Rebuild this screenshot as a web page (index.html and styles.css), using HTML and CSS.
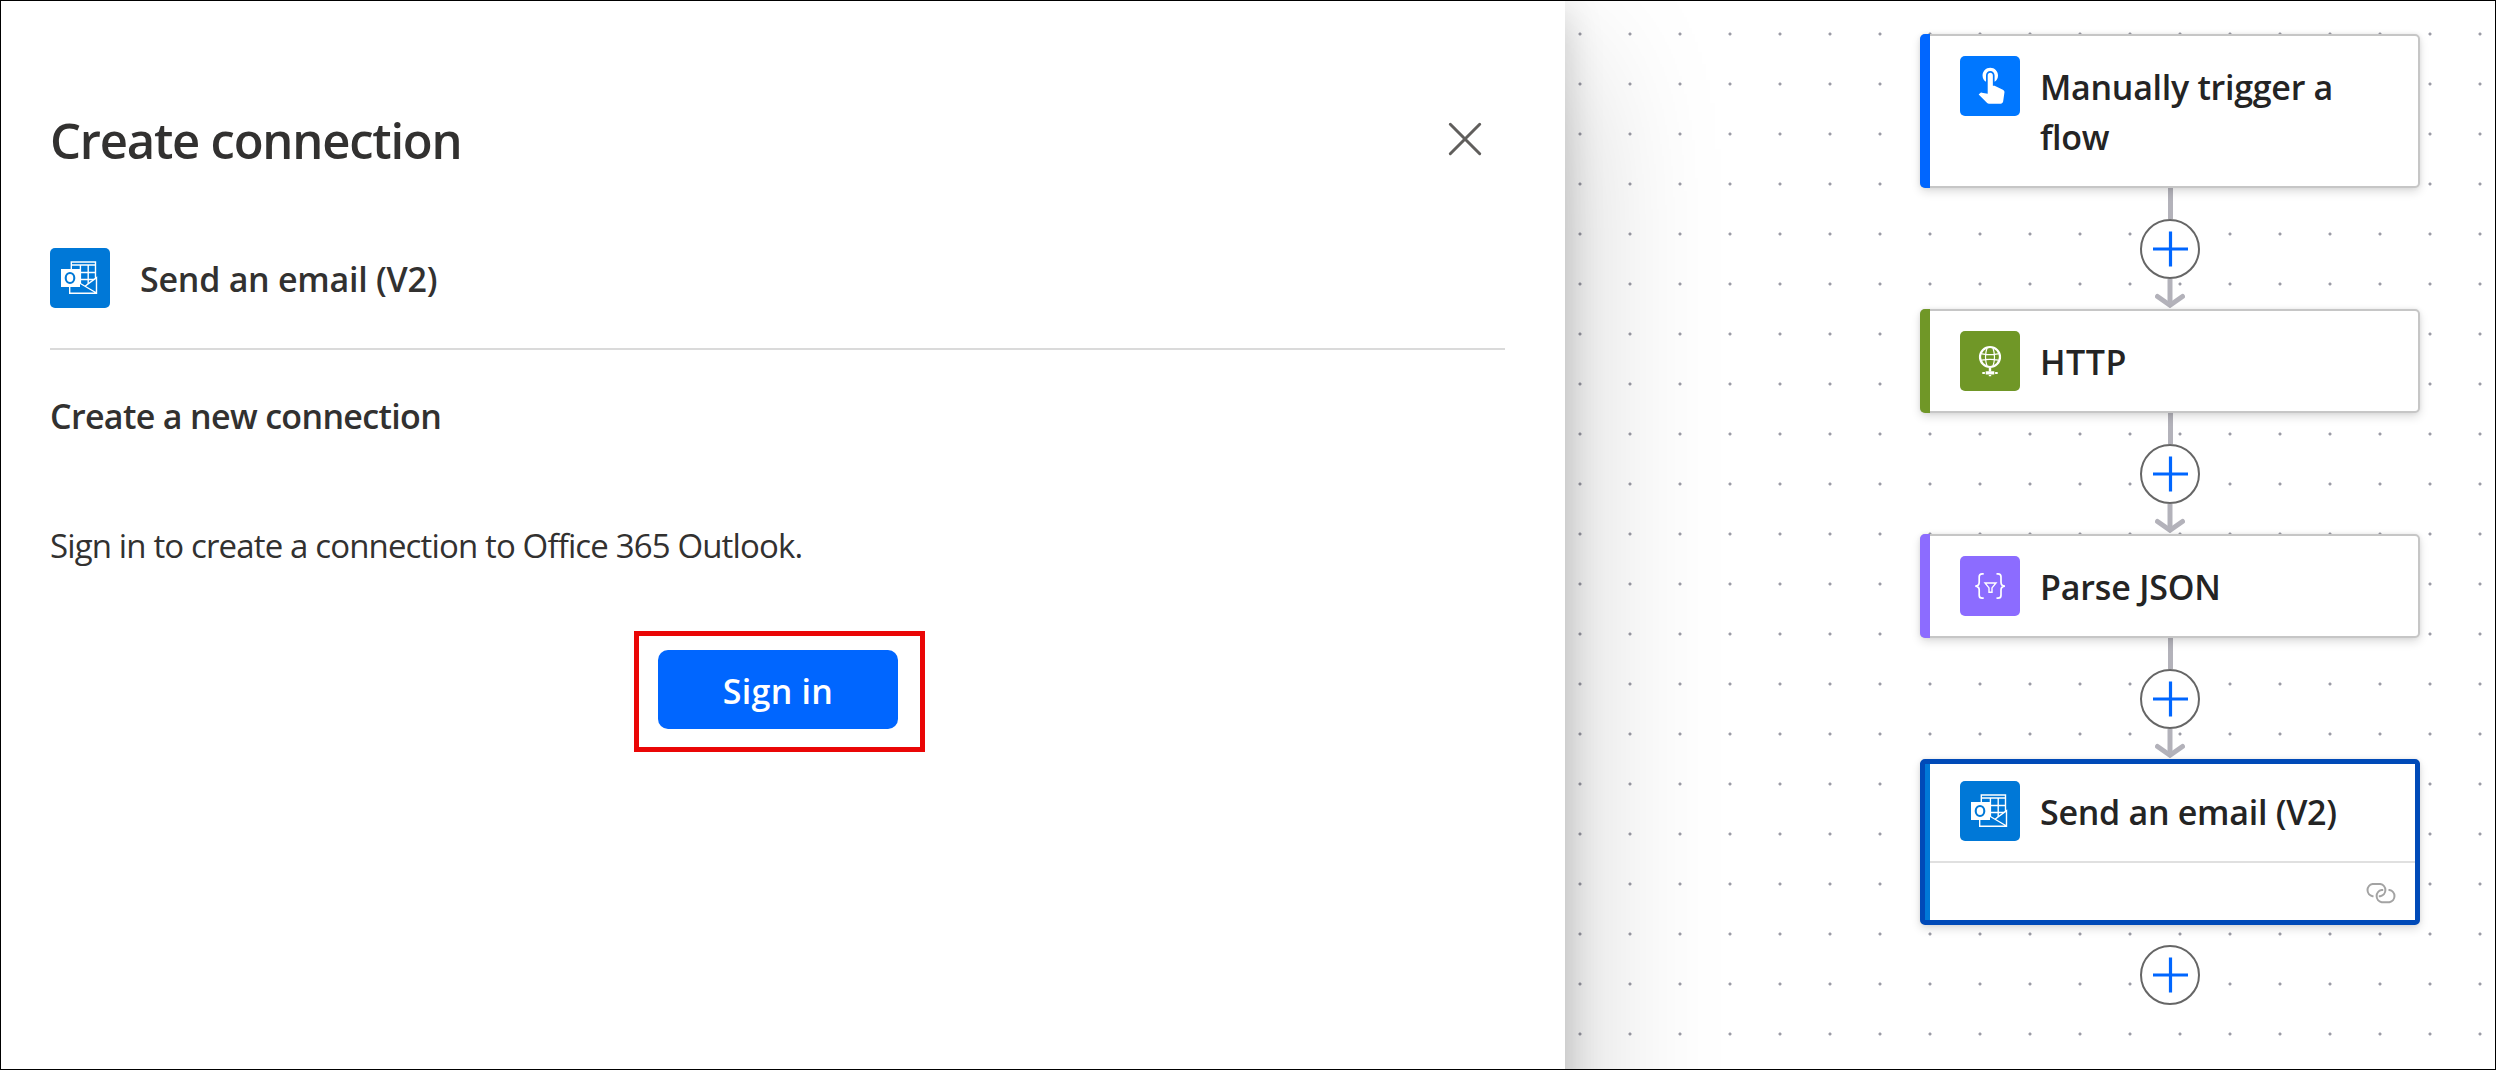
FILE: index.html
```
<!DOCTYPE html>
<html lang="en">
<head>
<meta charset="utf-8">
<title>Create connection</title>
<link rel="stylesheet" href="styles.css">
</head>
<body>
<svg class="defs" aria-hidden="true">
  <symbol id="outlook" viewBox="0 0 60 60">
    <g stroke="#fff" stroke-width="1.4">
      <path fill="none" d="M21.300 21V14h24.200v17M21.300 17h24.200M30.400 17v18M38.200 17v19M30 24.500h15.500M30 31.500h15.500"/>
      <path fill="#0078d7" stroke="none" d="M29 34.700l6 3.800 11.700-8.700v15.400h-27V36z"/>
      <path fill="none" d="M19.700 38v7.200h26.800V29.600L35 38.200M29.500 35l17 10"/>
    </g>
    <path fill="#fff" d="M11 21h19v18H11z"/>
    <ellipse cx="20" cy="30" rx="4.300" ry="5" fill="none" stroke="#0078d7" stroke-width="2.100"/>
  </symbol>
  <symbol id="plus" viewBox="0 0 36 36">
    <path d="M18.500 .5v35M1 18h35" stroke="#0066ff" stroke-width="3.200"/>
  </symbol>
  <symbol id="arrow" viewBox="0 0 30 29">
    <path d="M15 0v26" stroke="#b3b2ba" stroke-width="5"/>
    <path d="M2.500 17.500L15 26.200l12.500-8.700" fill="none" stroke="#b3b2ba" stroke-width="5" stroke-linecap="round"/>
  </symbol>
</svg>

<div class="app">
  <section class="panel">
    <header class="panel-header">
      <h1>Create connection</h1>
      <button class="close" aria-label="Close">
        <svg width="34" height="34" viewBox="0 0 34 34"><path d="M2.300 2.300l29.400 29.400M31.700 2.300L2.300 31.700" stroke="#605e5c" stroke-width="3" stroke-linecap="round"/></svg>
      </button>
    </header>
    <div class="action">
      <svg class="tile outlook"><use href="#outlook"/></svg>
      <span class="action-name">Send an email (V2)</span>
    </div>
    <h2>Create a new connection</h2>
    <p class="hint">Sign in to create a connection to Office 365 Outlook.</p>
    <div class="highlight"><button class="signin">Sign in</button></div>
  </section>

  <main class="canvas">
    <div class="flow">
      <article class="card trigger">
        <div class="card-head">
          <svg class="tile" viewBox="0 0 60 60"><path fill="#fff" transform="translate(10.500 6.500) scale(1.720)" d="M9 11.240V7.500C9 6.120 10.120 5 11.500 5S14 6.120 14 7.500v3.740c1.210-.81 2-2.180 2-3.740C16 5.010 13.990 3 11.500 3S7 5.010 7 7.500c0 1.560.79 2.930 2 3.740zm9.840 4.630l-4.540-2.260c-.17-.07-.35-.11-.54-.11H13v-6c0-.83-.67-1.500-1.500-1.500S10 6.670 10 7.500v10.740l-3.430-.72c-.08-.01-.15-.03-.24-.03-.31 0-.59.13-.79.33l-.79.8 4.940 4.940c.27.27.65.44 1.060.44h6.790c.75 0 1.330-.55 1.440-1.280l.75-5.270c.01-.07.02-.14.02-.2 0-.62-.38-1.160-.91-1.380z"/></svg>
          <h3>Manually trigger a flow</h3>
        </div>
      </article>
      <div class="link"><span class="line"></span><button class="add" aria-label="Add step"><svg><use href="#plus"/></svg></button><svg class="arrow"><use href="#arrow"/></svg></div>
      <article class="card http">
        <div class="card-head">
          <svg class="tile" viewBox="0 0 60 60">
            <g fill="none" stroke="#fff">
              <circle cx="30" cy="26" r="10" stroke-width="2.200"/>
              <path stroke-width="1.200" d="M20.500 22.700q9.500 1.800 19 0M20.500 29.300q9.500-1.800 19 0M27.200 16.500q-3.400 9.500 0 19M32.800 16.500q3.400 9.500 0 19"/>
              <path stroke-width="2.400" d="M30 37v3.500"/>
            </g>
            <path fill="#fff" d="M25.700 40.200h8.600v3.400h-8.600zM22.300 41h2.600v2h-2.600zM35.100 41h2.600v2h-2.600zM28.800 44h2.400v1.300h-2.400z"/>
          </svg>
          <h3 class="wide">HTTP</h3>
        </div>
      </article>
      <div class="link"><span class="line"></span><button class="add" aria-label="Add step"><svg><use href="#plus"/></svg></button><svg class="arrow"><use href="#arrow"/></svg></div>
      <article class="card parse">
        <div class="card-head">
          <svg class="tile" viewBox="0 0 60 60">
            <g fill="none" stroke="#fff" stroke-width="1.700">
              <path d="M23.700 17.800h-1.500q-3 0-3 3v5.400q0 3.600-3.900 3.900q3.900.3 3.900 3.900v5.200q0 3 3 3h1.500M36.500 17.800H38q3 0 3 3v5.400q0 3.600 3.900 3.900q-3.900.3-3.900 3.900v5.200q0 3-3 3h-1.500"/>
              <path stroke-width="1.400" d="M25 27h11l-4 4.900v4.400h-3v-4.400z"/>
            </g>
          </svg>
          <h3 class="even">Parse JSON</h3>
        </div>
      </article>
      <div class="link"><span class="line"></span><button class="add" aria-label="Add step"><svg><use href="#plus"/></svg></button><svg class="arrow"><use href="#arrow"/></svg></div>
      <article class="card mail selected">
        <div class="card-head">
          <svg class="tile"><use href="#outlook"/></svg>
          <h3>Send an email (V2)</h3>
        </div>
        <div class="card-foot">
          <svg width="32" height="22" viewBox="0 0 32 22"><g fill="none" stroke="#a3a3a3" stroke-width="2"><path d="M8.500 14.200H7.600a6.200 6.200 0 0 1 0-12.200h7.700a6.200 6.200 0 0 1 0 12.200h-1.500"/><path d="M23.500 8h.9a6.200 6.200 0 0 1 0 12.200h-7.700a6.200 6.200 0 0 1 0-12.200h1.500"/></g></svg>
        </div>
      </article>
      <div class="link last"><button class="add" aria-label="Add step"><svg><use href="#plus"/></svg></button></div>
    </div>
  </main>
</div>
</body>
</html>
```
FILE: styles.css
```
* { box-sizing: border-box; }
body { margin: 0; background: #fff; font-family: "Open Sans", "Noto Sans", sans-serif; color: #323130; }
h1, h2, h3, p { margin: 0; font-weight: 600; }
button { padding: 0; border: 0; background: none; font: inherit; }
svg { display: block; }
.defs { position: absolute; width: 0; height: 0; }

.app { position: relative; display: flex; align-items: flex-start; width: 2496px; height: 1070px; overflow: hidden; }
.app::after { content: ""; position: absolute; inset: 0; z-index: 3; border: 1px solid #000; pointer-events: none; }

/* connection panel; runs on past the bottom edge of the window */
.panel {
  position: relative; z-index: 2; flex: none; width: 1565px; height: 1300px; padding: 110px 60px 0 50px; background: #fff;
  box-shadow: 0 64px 144px rgba(0, 0, 0, .22), 0 12px 36px rgba(0, 0, 0, .18);
}
.panel-header { display: flex; justify-content: space-between; height: 60px; padding-right: 23px; }
h1 { font-size: 49px; line-height: 60px; letter-spacing: -1.230px; }
.close { width: 34px; height: 34px; margin-top: 12px; }
.action { display: flex; gap: 30px; height: 180px; padding-top: 78px; border-bottom: 2px solid #dadada; }
.action-name { padding-top: 1px; font-size: 34px; font-weight: 600; line-height: 60px; letter-spacing: -.25px; }
.tile { flex: none; width: 60px; height: 60px; border-radius: 5px; }
.outlook { background: #0078d7; }
h2 { margin-top: 41px; font-size: 34px; line-height: 50px; letter-spacing: -.660px; }
.hint { margin-top: 80px; font-size: 33px; font-weight: 400; line-height: 50px; letter-spacing: -.86px; }
.highlight { width: 291px; height: 121px; margin: 60px 0 0 584px; padding: 14px 19px; border: 5px solid #ea0606; }
.signin { display: block; width: 240px; height: 79px; padding-top: 3px; border-radius: 10px; background: #0066ff; color: #fff; font-size: 34px; font-weight: 600; line-height: 76px; letter-spacing: .25px; }

/* designer canvas */
.canvas {
  flex: 1; height: 1070px; padding: 34px 0 0 355px;
  background: radial-gradient(circle at 25px 25px, #9b9ba5 1px, rgba(155, 155, 165, 0) 2px) -10px 9px / 50px 50px;
}
.flow { display: flex; flex-direction: column; width: 500px; }
.card {
  position: relative; height: 104px; border: 2px solid #c6c6c6; border-radius: 5px; background: #fff; color: #242424;
  box-shadow: 0 4px 10px rgba(0, 0, 0, .13), 0 0 4px rgba(0, 0, 0, .08);
}
.card::before { content: ""; position: absolute; inset: -2px auto -2px -2px; width: 10px; border-radius: 5px 0 0 5px; background: var(--accent); }
.card-head { display: flex; gap: 20px; padding: 20px 60px 0 38px; }
.card h3 { padding-top: 6px; font-size: 34px; line-height: 50px; letter-spacing: -.28px; }
.card h3.wide { letter-spacing: .5px; }
.card h3.even { letter-spacing: -.18px; }
.card .tile { background: var(--icon, var(--accent)); }
.trigger { --accent: #0066ff; --icon: #0077ff; height: 154px; }
.http { --accent: #709727; }
.parse { --accent: #8c6cff; }
.mail { --accent: #0078d7; height: 166px; }
.selected { border: 5px solid #004ab8; }
.selected::before { inset: 0 auto 0 0; width: 5px; border-radius: 0; }
.selected .card-head { height: 97px; padding: 17px 20px 0 35px; }
.card-foot { display: flex; justify-content: flex-end; height: 59px; margin-left: 5px; padding: 19px 18px 0 0; border-top: 2px solid #e0e0e0; }

.link { display: flex; flex-direction: column; align-items: center; height: 121px; }
.line { width: 5px; height: 31px; background: #b3b2ba; }
.add { display: grid; place-items: center; width: 60px; height: 60px; border: 2px solid #666; border-radius: 50%; background: #fff; }
.add svg { width: 36px; height: 36px; }
.arrow { width: 30px; height: 29px; }
.last { padding-top: 20px; }
```
